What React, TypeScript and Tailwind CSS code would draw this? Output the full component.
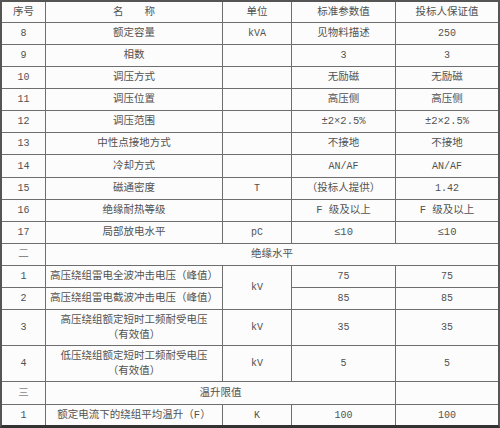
import type { ReactNode } from "react";
import { clsx } from "clsx";

type SpecRow = {
  no: string;
  name: string;
  unit?: string;
  std?: string;
  bid?: string;
};

const mainRows: SpecRow[] = [
  { no: "8", name: "额定容量", unit: "kVA", std: "见物料描述", bid: "250" },
  { no: "9", name: "相数", std: "3", bid: "3" },
  { no: "10", name: "调压方式", std: "无励磁", bid: "无励磁" },
  { no: "11", name: "调压位置", std: "高压侧", bid: "高压侧" },
  { no: "12", name: "调压范围", std: "±2×2.5%", bid: "±2×2.5%" },
  { no: "13", name: "中性点接地方式", std: "不接地", bid: "不接地" },
  { no: "14", name: "冷却方式", std: "AN/AF", bid: "AN/AF" },
  { no: "15", name: "磁通密度", unit: "T", std: "（投标人提供）", bid: "1.42" },
  { no: "16", name: "绝缘耐热等级", std: "F 级及以上", bid: "F 级及以上" },
  { no: "17", name: "局部放电水平", unit: "pC", std: "≤10", bid: "≤10" },
];

const isLatin = (text: string) => /^[\x20-\x7E]+$/.test(text);

function Cell({ children, className }: { children?: ReactNode; className?: string }) {
  const latin = typeof children === "string" && isLatin(children);
  return (
    <div
      className={clsx(
        "flex items-center justify-center bg-[#fcfcfc] text-center leading-[15px]",
        latin ? "text-[10px]" : "text-[10.5px]",
        className
      )}
    >
      {children}
    </div>
  );
}

export default function App() {
  return (
    <div className="h-[428px] w-[500px] bg-[#fcfcfc]">
      <div className="grid w-[500px] grid-cols-[43px_176px_68px_103px_102px] grid-rows-[20px_repeat(6,21px)_22px_repeat(6,21px)_35px_35px_22px_20px] gap-px border-t-2 border-r-2 border-b-[3px] border-l-2 border-[#555] border-b-[#333] bg-[#6e6e6e] font-['Liberation_Mono','Noto_Sans_CJK_SC',monospace] text-[#525252]">
        <Cell>序号</Cell>
        <Cell>名　　称</Cell>
        <Cell>单位</Cell>
        <Cell>标准参数值</Cell>
        <Cell>投标人保证值</Cell>

        {mainRows.map((row) => (
          <div key={row.no} className="contents">
            <Cell>{row.no}</Cell>
            <Cell>{row.name}</Cell>
            <Cell>{row.unit}</Cell>
            <Cell>{row.std}</Cell>
            <Cell>{row.bid}</Cell>
          </div>
        ))}

        {/* 二 绝缘水平 */}
        <Cell className="text-[#888]">二</Cell>
        <Cell className="col-span-4">绝缘水平</Cell>

        <Cell>1</Cell>
        <Cell>高压绕组雷电全波冲击电压（峰值）</Cell>
        <Cell className="row-span-2">kV</Cell>
        <Cell>75</Cell>
        <Cell>75</Cell>

        <Cell>2</Cell>
        <Cell>高压绕组雷电截波冲击电压（峰值）</Cell>
        <Cell>85</Cell>
        <Cell>85</Cell>

        <Cell>3</Cell>
        <Cell>
          高压绕组额定短时工频耐受电压
          <br />
          （有效值）
        </Cell>
        <Cell>kV</Cell>
        <Cell>35</Cell>
        <Cell>35</Cell>

        <Cell>4</Cell>
        <Cell>
          低压绕组额定短时工频耐受电压
          <br />
          （有效值）
        </Cell>
        <Cell>kV</Cell>
        <Cell>5</Cell>
        <Cell>5</Cell>

        {/* 三 温升限值 */}
        <Cell className="text-[#888]">三</Cell>
        <Cell className="col-span-3">温升限值</Cell>
        <Cell />

        <Cell>1</Cell>
        <Cell>额定电流下的绕组平均温升（F）</Cell>
        <Cell>K</Cell>
        <Cell>100</Cell>
        <Cell>100</Cell>
      </div>
    </div>
  );
}
